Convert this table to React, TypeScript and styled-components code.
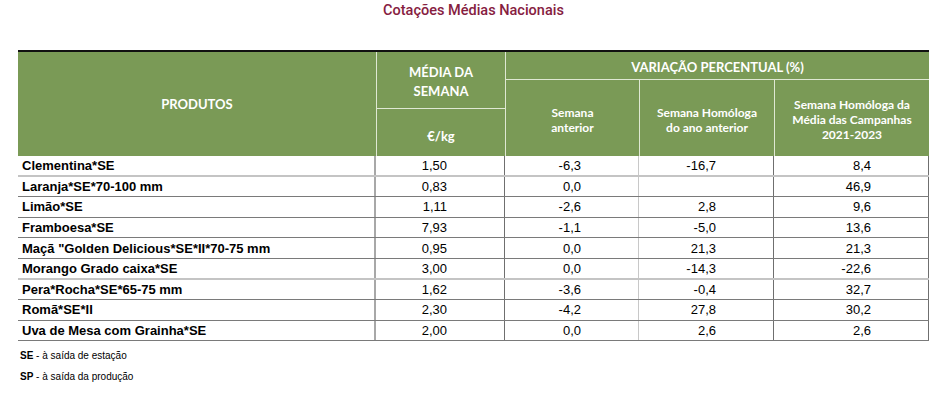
import React from "react";
import styled, { createGlobalStyle } from "styled-components";

const Global = createGlobalStyle`
  html, body { margin: 0; padding: 0; background: #ffffff; }
  * { box-sizing: border-box; }
`;

const Page = styled.div`
  width: 943px;
  height: 413px;
  padding: 0 0 0 18px;
  background: #ffffff;
  overflow: hidden;
`;

const Title = styled.div`
  width: 911px;
  height: 22px;
  padding-top: 1px;
  text-align: center;
  font-family: Roboto, "Liberation Sans", sans-serif;
  font-weight: 500;
  font-size: 14.5px;
  line-height: 20px;
  color: #86203f;
  margin-bottom: 28px;
`;

const cols = "358px 128px 133px 134px 154px";

const Header = styled.div`
  display: grid;
  grid-template-columns: ${cols};
  grid-template-rows: 27px 28px 47px;
  gap: 1px;
  width: 911px;
  background: #dfe8d3;
  border-top: 2px solid #111;
  font-family: Lato, "Open Sans", sans-serif;
  font-weight: 700;
  color: #ffffff;
`;

const HCell = styled.div<{ $col: string; $row: string; $small?: boolean; $pt?: number }>`
  grid-column: ${(p) => p.$col};
  grid-row: ${(p) => p.$row};
  background: #7a9a56;
  display: flex;
  align-items: center;
  justify-content: center;
  text-align: center;
  font-size: ${(p) => (p.$small ? 12 : 13)}px;
  line-height: ${(p) => (p.$small ? 15 : 19)}px;
  padding-top: ${(p) => p.$pt ?? 0}px;
`;

const Body = styled.div`
  width: 911px;
  font-family: "Liberation Sans", Arial, sans-serif;
  font-size: 13px;
  color: #000;
`;

const Row = styled.div<{ $light?: boolean }>`
  display: grid;
  grid-template-columns: 358px 129px 134px 135px 155px;
  height: 20.6px;
  border-bottom: ${(p) => (p.$light ? "2px solid #c4c4c4" : "1px solid #7a7a7a")};
`;

const NameCell = styled.div`
  font-weight: 700;
  padding-left: 4px;
  display: flex;
  align-items: center;
  white-space: nowrap;
  border-right: 2px solid #a8a8a8;
`;

const NumCell = styled.div<{ $line: string }>`
  display: flex;
  align-items: center;
  justify-content: flex-end;
  padding-right: 57px;
  border-right: 1px solid ${(p) => p.$line};
`;

const Footer = styled.div`
  margin-top: 9px;
  padding-left: 2px;
  font-family: "Liberation Sans", Arial, sans-serif;
  font-size: 10px;
  line-height: 12px;
  color: #000;
  display: flex;
  flex-direction: column;
  gap: 9px;
`;

const Abbr = styled.b`
  font-weight: 700;
`;

const rows = [
  { n: "Clementina*SE", v: ["1,50", "-6,3", "-16,7", "8,4"], light: true },
  { n: "Laranja*SE*70-100 mm", v: ["0,83", "0,0", "", "46,9"] },
  { n: "Limão*SE", v: ["1,11", "-2,6", "2,8", "9,6"] },
  { n: "Framboesa*SE", v: ["7,93", "-1,1", "-5,0", "13,6"] },
  { n: 'Maçã "Golden Delicious*SE*II*70-75 mm', v: ["0,95", "0,0", "21,3", "21,3"] },
  { n: "Morango Grado caixa*SE", v: ["3,00", "0,0", "-14,3", "-22,6"], light: true },
  { n: "Pera*Rocha*SE*65-75 mm", v: ["1,62", "-3,6", "-0,4", "32,7"] },
  { n: "Romã*SE*II", v: ["2,30", "-4,2", "27,8", "30,2"] },
  { n: "Uva de Mesa com Grainha*SE", v: ["2,00", "0,0", "2,6", "2,6"] },
];

const lineColors = ["#6f6f6f", "#c8c8c8", "#6f6f6f", "#6f6f6f"];

export default function App() {
  return (
    <>
      <Global />
      <Page>
        <Title>Cotações Médias Nacionais</Title>
        <Header>
          <HCell $col="1" $row="1 / 4">PRODUTOS</HCell>
          <HCell $col="2" $row="1 / 3" $pt={3}>
            MÉDIA DA
            <br />
            SEMANA
          </HCell>
          <HCell $col="2" $row="3" $pt={8}>€/kg</HCell>
          <HCell $col="3 / 6" $row="1" $pt={3}>VARIAÇÃO PERCENTUAL (%)</HCell>
          <HCell $col="3" $row="2 / 4" $small $pt={4}>
            Semana
            <br />
            anterior
          </HCell>
          <HCell $col="4" $row="2 / 4" $small $pt={4}>
            Semana Homóloga
            <br />
            do ano anterior
          </HCell>
          <HCell $col="5" $row="2 / 4" $small $pt={2}>
            Semana Homóloga da
            <br />
            Média das Campanhas
            <br />
            2021-2023
          </HCell>
        </Header>
        <Body>
          {rows.map((r) => (
            <Row key={r.n} $light={r.light}>
              <NameCell>{r.n}</NameCell>
              {r.v.map((v, i) => (
                <NumCell key={i} $line={lineColors[i]}>
                  {v}
                </NumCell>
              ))}
            </Row>
          ))}
        </Body>
        <Footer>
          <div>
            <Abbr>SE</Abbr> - à saída de estação
          </div>
          <div>
            <Abbr>SP</Abbr> - à saída da produção
          </div>
        </Footer>
      </Page>
    </>
  );
}
